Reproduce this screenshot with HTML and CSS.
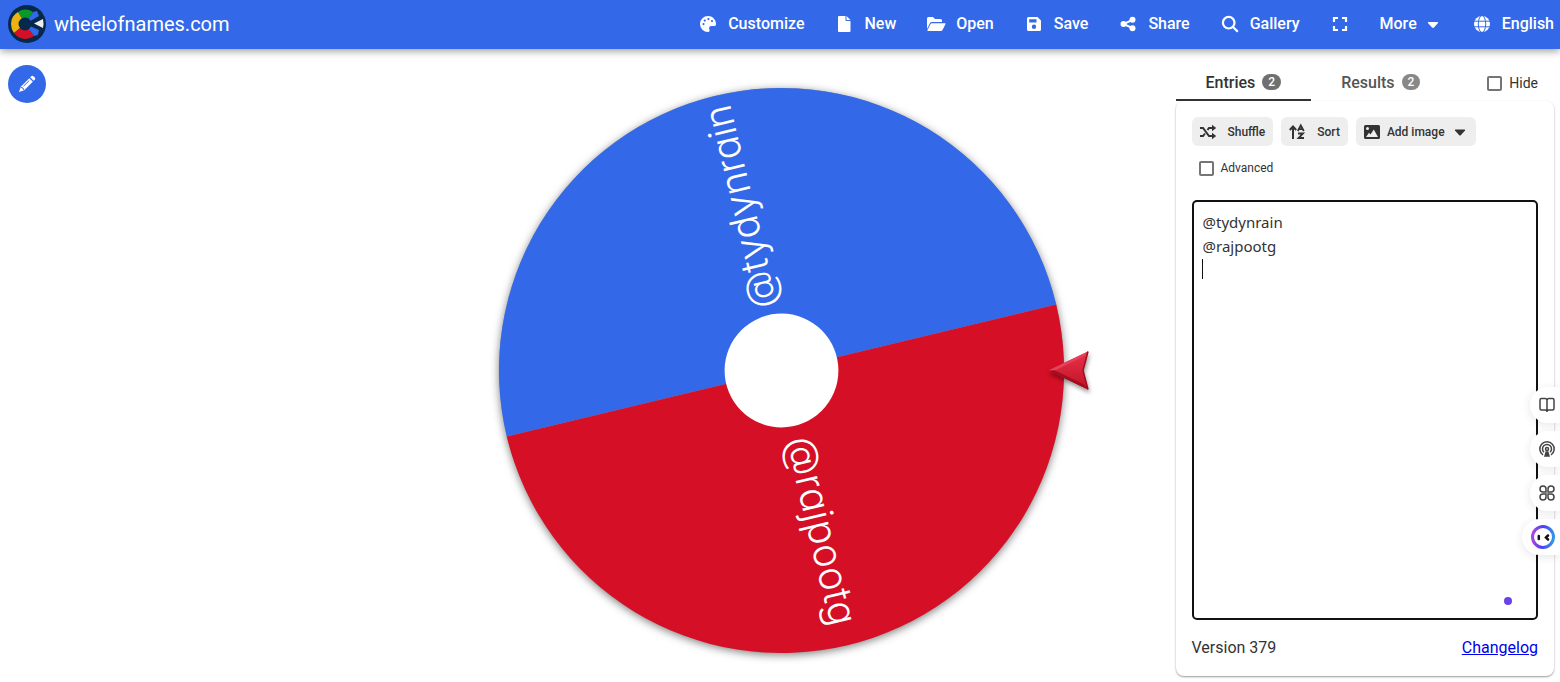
FILE: index.html
```
<!DOCTYPE html>
<html lang="en">
<head>
<meta charset="UTF-8">
<meta name="viewport" content="width=device-width, initial-scale=1.0">
<title>Wheel of Names</title>
<link rel="stylesheet" href="styles.css">
</head>
<body>
<header class="toolbar">
    <a class="brand" href="#">
        <svg class="logo" viewBox="0 0 38 38" aria-hidden="true">
            <circle cx="19" cy="19" r="19" fill="#06294b"/>
            <path d="M17 19 L10 7 A14 14 0 0 1 25 7 Z" fill="#0a9a27"/>
            <path d="M17 19 L10 7 Q3 11 3 19 Q3 24 6 28 Z" fill="#eeb211"/>
            <path d="M17 19 L6 28 A14 14 0 0 0 26 31 Z" fill="#d50f25"/>
            <path d="M17 19 L25 7 L29 6 L31 11 Z M17 19 L31 25 L30 30 L26 31 Z" fill="#3369e8"/>
            <circle cx="17" cy="19" r="6.500" fill="#06294b"/>
            <path d="M26 18.500 L35 14 Q36 18.500 35 23 Z" fill="#eee"/>
        </svg>
        <span>wheelofnames.com</span>
    </a>
    <nav class="menu">
        <button type="button">
            <svg viewBox="0 0 18 18"><path fill="currentColor" fill-rule="evenodd" d="M9 1 A8 8 0 0 0 1 9 A8 8 0 0 0 9 17 C10.500 17 11 15.700 10.400 14.500 C9.600 12.600 10.500 11 12.500 11 H15.400 C16.500 11 17 10 17 9 C17 4.500 13.400 1 9 1 Z M4.500 8 A1.100 1.100 0 1 1 4.500 10.200 A1.100 1.100 0 1 1 4.500 8 Z M5.800 4.500 A1.100 1.100 0 1 1 5.800 6.700 A1.100 1.100 0 1 1 5.800 4.500 Z M9.400 3 A1.100 1.100 0 1 1 9.400 5.200 A1.100 1.100 0 1 1 9.400 3 Z M13 5 A1.100 1.100 0 1 1 13 7.200 A1.100 1.100 0 1 1 13 5 Z"/></svg>
            Customize
        </button>
        <button type="button">
            <svg viewBox="0 0 18 18"><path fill="currentColor" d="M4 1 H10.500 V5.200 Q10.500 6 11.300 6 H15.500 V16 Q15.500 17 14.500 17 H4 Q3 17 3 16 V2 Q3 1 4 1 Z M11.500 1 L15.500 5 H11.500 Z"/></svg>
            New
        </button>
        <button type="button">
            <svg viewBox="0 0 18 18"><path fill="currentColor" d="M0 14 V3.500 Q0 2 1.500 2 H6 L8 4 H13.500 Q15 4 15 5.500 V7 H5 Q3.500 7 2.900 8.200 Z M1 16 Q0 16 .6 14.800 L3.600 9 Q4 8.200 5 8.200 H18 Q19 8.200 18.400 9.200 L15.500 15 Q15 16 14 16 Z"/></svg>
            Open
        </button>
        <button type="button">
            <svg viewBox="0 0 18 18"><path fill="currentColor" fill-rule="evenodd" d="M3.500 2 H12.500 L16 5.500 V14.500 Q16 16 14.500 16 H3.500 Q2 16 2 14.500 V3.500 Q2 2 3.500 2 Z M4.200 4.200 V7.500 H11.500 V4.200 Z M9 9.500 A2.200 2.200 0 1 0 9 13.900 A2.200 2.200 0 1 0 9 9.500 Z"/></svg>
            Save
        </button>
        <button type="button">
            <svg viewBox="0 0 18 18"><g fill="currentColor"><circle cx="4.500" cy="9" r="3"/><circle cx="13.500" cy="4.800" r="3"/><circle cx="13.500" cy="13.200" r="3"/></g><path d="M13.500 4.800 L4.500 9 L13.500 13.200" fill="none" stroke="currentColor" stroke-width="2"/></svg>
            Share
        </button>
        <button type="button">
            <svg viewBox="0 0 18 18"><g fill="none" stroke="currentColor" stroke-width="2.200"><circle cx="7.700" cy="7.700" r="5.800"/><path d="M12 12 L16.800 16.800"/></g></svg>
            Gallery
        </button>
        <button type="button" aria-label="Fullscreen">
            <svg viewBox="0 0 18 18"><path fill="none" stroke="currentColor" stroke-width="2.200" d="M3 7 V3 H7 M11 3 H15 V7 M15 11 V15 H11 M7 15 H3 V11"/></svg>
        </button>
        <button type="button" class="more">
            More
            <svg viewBox="0 0 18 18"><path fill="currentColor" d="M4 8 Q3.500 7 4.500 7 H13.500 Q14.500 7 14 8 L10 12.500 Q9 13.300 8 12.500 Z"/></svg>
        </button>
        <button type="button">
            <svg viewBox="0 0 18 18"><circle cx="9" cy="9" r="8" fill="currentColor"/><g class="globe-lines"><ellipse cx="9" cy="9" rx="3.700" ry="8.500"/><path d="M1 6.200 H17 M1 11.800 H17"/></g></svg>
            English
        </button>
    </nav>
</header>

<main class="page">
    <div class="left">
        <button type="button" class="edit" aria-label="Edit title">
            <svg viewBox="0 0 18 18"><g fill="currentColor"><path d="M11.300 3.200 L14.800 6.700 L6.200 15.200 L1 17 L2.800 11.700 Z"/><path d="M12.200 2.300 L13.500 1 Q14.500 .3 15.400 1.200 L16.800 2.600 Q17.700 3.500 17 4.500 L15.700 5.800 Z"/></g><path class="edit-lines" d="M5.500 11.200 L11.300 5.500 M3 12.500 L5 13 L5.500 15"/></svg>
        </button>
    </div>

    <svg class="wheel" viewBox="-306 -306 612 612" role="img" aria-label="Wheel with two names">
        <defs>
            <linearGradient id="arrowFill" x1="0" y1="0" x2="0" y2="1">
                <stop offset="0" stop-color="#e8334a"/>
                <stop offset="1" stop-color="#c01226"/>
            </linearGradient>
        </defs>
        <circle class="wheel-shadow" r="283"/>
        <g transform="rotate(-13.500)">
            <path d="M-283 0 A283 283 0 0 1 283 0 Z" fill="#3369e8"/>
            <path d="M-283 0 A283 283 0 0 0 283 0 Z" fill="#d50f25"/>
        </g>
        <text class="wheel-name" transform="rotate(-103.500)" x="273" y="12" text-anchor="end">@tydynrain</text>
        <text class="wheel-name second" transform="rotate(76.500)" x="262" y="12" text-anchor="end">@rajpootg</text>
        <circle r="57" fill="#fff"/>
        <g class="pointer">
            <path d="M267 0 L307 -19 L302 0 L307 19 Z" fill="url(#arrowFill)"/>
            <path d="M267 0 L307 -19 L304 -15 L274 0 Z" fill="#e8405a"/>
            <path d="M267 0 L307 19 L303 14 L274 0 Z" fill="#a50d1e"/>
            <path d="M307 -19 L302 0 L307 19" fill="none" stroke="#a00c1c" stroke-width="1.500"/>
        </g>
    </svg>

    <aside class="side">
        <div class="tabs">
            <button type="button" class="tab active">Entries <span class="count">2</span></button>
            <button type="button" class="tab">Results <span class="count">2</span></button>
            <label class="check hide"><input type="checkbox"> Hide</label>
        </div>
        <div class="card">
            <div class="actions">
                <button type="button">
                    <svg viewBox="0 0 16 16"><path fill="none" stroke="currentColor" stroke-width="2" d="M0 4 H3 L9 12 H13 M0 12 H3 L5 9.500 M7.500 6 L9 4 H13"/><path fill="currentColor" d="M12 .8 L16.200 4 L12 7.200 Z M12 8.800 L16.200 12 L12 15.200 Z"/></svg>
                    Shuffle
                </button>
                <button type="button">
                    <svg viewBox="0 0 16 16"><path fill="none" stroke="currentColor" stroke-width="2" d="M4 15 V3 M.8 6 L4 2.500 L7.200 6"/><path fill="none" stroke="currentColor" stroke-width="1.800" d="M8.800 7 L11.800 1.500 L14.800 7 M10 5.200 H13.600 M9 9.500 H14 L9.600 14 H15"/></svg>
                    Sort
                </button>
                <button type="button" class="add-image">
                    <svg viewBox="0 0 16 16"><path fill="currentColor" fill-rule="evenodd" d="M1.500 1 H14.500 Q16 1 16 2.500 V13.500 Q16 15 14.500 15 H1.500 Q0 15 0 13.500 V2.500 Q0 1 1.500 1 Z M2 13 H14 L9.800 5.500 L6.500 10.500 L5 8.700 Z M3.500 3 A1.500 1.500 0 1 0 3.500 6 A1.500 1.500 0 1 0 3.500 3 Z"/></svg>
                    Add image
                    <svg class="drop" viewBox="0 0 16 16"><path fill="currentColor" d="M3 6.500 Q2.500 5.500 3.500 5.500 H12.500 Q13.500 5.500 13 6.500 L9 11 Q8 12 7 11 Z"/></svg>
                </button>
            </div>
            <label class="check advanced"><input type="checkbox"> Advanced</label>
            <div class="editor">
                <textarea class="entries" aria-label="Entries" spellcheck="false">@tydynrain
@rajpootg
</textarea>
                <span class="caret"></span>
            </div>
            <div class="card-footer">
                <span>Version 379</span>
                <a href="#">Changelog</a>
            </div>
        </div>
    </aside>
</main>

<span class="dot"></span>
<div class="floating">
    <button type="button" aria-label="Read">
        <svg viewBox="0 0 16 16"><path d="M8 3.500 Q8 1.500 6 1.500 H2.500 Q1 1.500 1 3 V11.500 Q1 13 2.500 13 H6 Q8 13 8 14.500 Q8 13 10 13 H13.500 Q15 13 15 11.500 V3 Q15 1.500 13.500 1.500 H10 Q8 1.500 8 3.500 V15"/></svg>
    </button>
    <button type="button" aria-label="Podcast">
        <svg viewBox="0 0 16 16"><path d="M4 14 A7.200 7.200 0 1 1 12 14 M5 11.300 A4.500 4.500 0 1 1 11 11.300"/><circle cx="8" cy="8" r="1.500"/><path fill="currentColor" d="M6 15 L7.200 11 H8.800 L10 15 Z"/></svg>
    </button>
    <button type="button" aria-label="Apps">
        <svg viewBox="0 0 16 16"><path d="M7 7 H4 A3 3 0 1 1 7 4 Z M9 7 V4 A3 3 0 1 1 12 7 Z M7 9 V12 A3 3 0 1 1 4 9 Z M9 9 H12 A3 3 0 1 1 9 12 Z"/></svg>
    </button>
    <button type="button" class="assistant" aria-label="Assistant">
        <svg viewBox="0 0 24 24">
            <defs>
                <linearGradient id="ring" x1="0" y1=".7" x2="1" y2=".8">
                    <stop offset="0" stop-color="#a845e0"/>
                    <stop offset=".45" stop-color="#4b3cf5"/>
                    <stop offset="1" stop-color="#2e9bea"/>
                </linearGradient>
            </defs>
            <circle cx="12" cy="12" r="10.500" fill="#fff" stroke="url(#ring)" stroke-width="3"/>
            <path d="M7.800 11 V14 M17 10.500 L15 12.500 L17 14.500" fill="none" stroke="#111" stroke-width="2.500" stroke-linecap="round"/>
        </svg>
    </button>
</div>
</body>
</html>
```
FILE: styles.css
```
* {
    box-sizing: border-box;
}

body {
    margin: 0;
    height: 100vh;
    display: flex;
    flex-direction: column;
    overflow: hidden;
    font-family: Roboto, sans-serif;
    font-size: 16px;
    color: #333;
    background-color: #fff;
}

button {
    border: none;
    padding: 0;
    background: none;
    font-family: inherit;
    color: inherit;
    cursor: pointer;
}

svg {
    display: block;
    flex: none;
    overflow: visible;
}

.toolbar {
    display: flex;
    align-items: center;
    justify-content: space-between;
    height: 49px;
    flex: none;
    padding: 0 6px 2px 8px;
    background-color: #3369e8;
    color: #fff;
    box-shadow: 0 2px 8px rgba(0, 0, 0, 0.4);
}

.brand {
    display: flex;
    align-items: center;
    gap: 8px;
    color: #fff;
    font-size: 20px;
    text-decoration: none;
}

.logo {
    width: 38px;
    height: 38px;
}

.menu {
    display: flex;
    align-items: center;
    gap: 31px;
}

.menu button {
    display: flex;
    align-items: center;
    gap: 11px;
    font-size: 16px;
    font-weight: 500;
}

.menu svg {
    width: 18px;
    height: 18px;
}

.menu .more {
    gap: 7px;
}

.globe-lines {
    fill: none;
    stroke: #3369e8;
    stroke-width: 1;
}

.page {
    flex: 1;
    min-height: 0;
    display: grid;
    grid-template-columns: 1fr 2fr 1fr;
    gap: 16px;
    padding: 16px 6px 6px 8px;
}

.edit {
    display: flex;
    align-items: center;
    justify-content: center;
    width: 38px;
    height: 38px;
    border-radius: 50%;
    background-color: #3369e8;
    color: #fff;
}

.edit svg {
    width: 18px;
    height: 18px;
}

.edit-lines {
    fill: none;
    stroke: #3369e8;
    stroke-width: 1;
}

.wheel {
    width: 100%;
    height: 100%;
    min-height: 0;
}

.wheel-shadow {
    fill: #999;
    filter: drop-shadow(0 2px 4px rgba(0, 0, 0, 0.5));
}

.wheel-name {
    font-family: Inter, sans-serif;
    font-feature-settings: "cv11";
    font-size: 39px;
    font-weight: 300;
    fill: #fff;
}

.wheel-name.second {
    font-size: 40px;
}

.pointer {
    filter: drop-shadow(1px 3px 2px rgba(0, 0, 0, 0.4));
}

.side {
    display: flex;
    flex-direction: column;
    min-width: 0;
}

.tabs {
    display: flex;
    height: 36px;
}

.tab {
    display: flex;
    align-items: center;
    gap: 7px;
    padding: 0 30px;
    border-bottom: 2px solid transparent;
    font-size: 16px;
    font-weight: 500;
    color: #555;
}

.tab.active {
    border-bottom-color: #333;
    color: #333;
}

.count {
    padding: 0 6px;
    border-radius: 8px;
    background-color: #888;
    color: #fff;
    font-size: 12px;
    line-height: 16px;
}

.active .count {
    background-color: #707070;
}

.check {
    display: flex;
    align-items: center;
    gap: 7px;
}

.check input {
    appearance: none;
    width: 15px;
    height: 15px;
    margin: 0;
    border: 2px solid #757575;
    border-radius: 2px;
}

.hide {
    margin-left: auto;
    padding-right: 16px;
    font-size: 14px;
}

.card {
    flex: 1;
    display: flex;
    flex-direction: column;
    padding: 16px;
    border-radius: 8px;
    box-shadow: 0 1px 2px rgba(0, 0, 0, 0.4);
}

.actions {
    display: flex;
    gap: 8px;
}

.actions button {
    display: flex;
    align-items: center;
    gap: 12px;
    height: 29px;
    padding: 0 8px;
    border-radius: 6px;
    background-color: #eee;
    font-size: 12px;
    font-weight: 500;
}

.actions svg {
    width: 16px;
    height: 16px;
}

.actions .add-image {
    gap: 7px;
}

.advanced {
    margin: 14px 0 24px;
    padding-left: 7px;
    font-size: 12px;
    line-height: 16px;
}

.editor {
    position: relative;
    flex: 1;
    display: flex;
}

.entries {
    width: 100%;
    padding: 8px 9px;
    border: 2px solid #111;
    border-radius: 5px;
    outline: none;
    resize: none;
    font-family: "Noto Sans", sans-serif;
    font-size: 15px;
    line-height: 24px;
    color: #333;
}

.caret {
    position: absolute;
    left: 10px;
    top: 59px;
    width: 1px;
    height: 20px;
    background-color: #111;
}

.card-footer {
    display: flex;
    justify-content: space-between;
    padding-top: 16px;
    line-height: 24px;
}

.card-footer a {
    color: #0000ee;
}

/* browser assistant bar, sits over the page */
.floating {
    position: fixed;
    right: 0;
    top: 387px;
    display: flex;
    flex-direction: column;
    align-items: flex-end;
    gap: 8px;
}

.floating button {
    display: flex;
    align-items: center;
    justify-content: center;
    width: 30px;
    height: 36px;
    padding-left: 4px;
    border-radius: 18px 0 0 18px;
    background-color: #fff;
    box-shadow: 0 2px 10px rgba(0, 0, 0, 0.1);
}

.floating svg {
    width: 16px;
    height: 16px;
    fill: none;
    stroke: #444;
    stroke-width: 1.5;
    color: #444;
}

.floating .assistant {
    width: 38px;
}

.floating .assistant svg {
    width: 24px;
    height: 24px;
}

.dot {
    position: fixed;
    right: 48px;
    bottom: 77px;
    width: 8px;
    height: 8px;
    border-radius: 50%;
    background-color: #6b42e8;
}
```
